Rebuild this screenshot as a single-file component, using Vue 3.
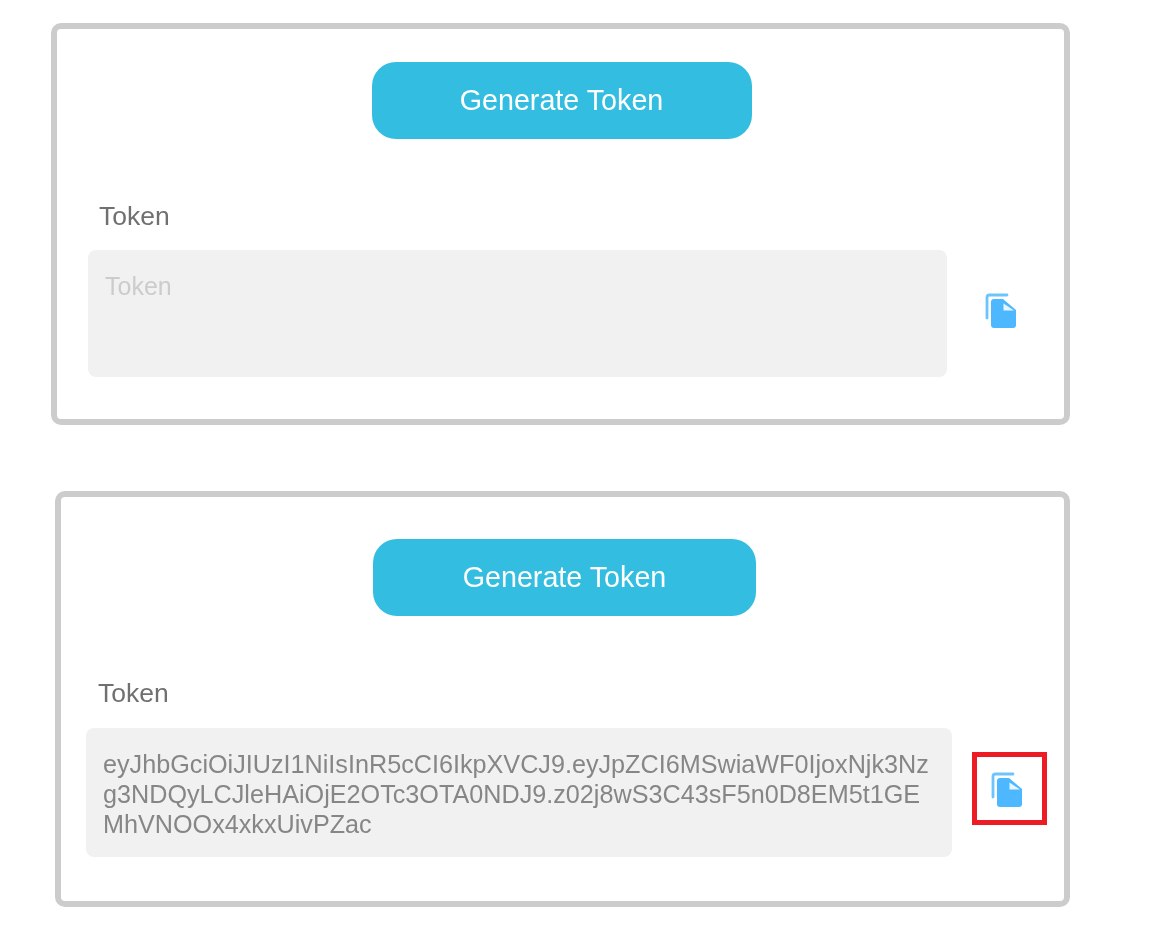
<template>
  <div class="page">
    <section v-for="card in cards" :key="card.id" class="card" :class="card.id">
      <button type="button" class="generate">Generate Token</button>
      <p class="label">Token</p>
      <div class="row">
        <div class="token" :class="{ empty: !card.token }">{{ card.token || 'Token' }}</div>
        <div class="copy" :class="{ marked: card.marked }">
          <svg width="32" height="36" viewBox="0 0 32 36">
            <path d="M2 25V4.500A2.500 2.500 0 0 1 4.500 2H22" fill="none" stroke="#6cc4ff" stroke-width="2.800" stroke-linecap="round" />
            <path d="M9 6H18L31 17V32A3 3 0 0 1 28 35H9A3 3 0 0 1 6 32V9A3 3 0 0 1 9 6Z" fill="#4db8ff" />
            <path d="M18.500 10.500V17.500H29Z" fill="#e6f5ff" />
          </svg>
        </div>
      </div>
    </section>
  </div>
</template>

<script setup>
const cards = [
  { id: 'first', token: '', marked: false },
  {
    id: 'second',
    token: 'eyJhbGciOiJIUzI1NiIsInR5cCI6IkpXVCJ9.eyJpZCI6MSwiaWF0IjoxNjk3Nzg3NDQyLCJleHAiOjE2OTc3OTA0NDJ9.z02j8wS3C43sF5n0D8EM5t1GEMhVNOOx4xkxUivPZac',
    marked: true,
  },
]
</script>

<style>
body {
  background: #fff;
}
</style>

<style scoped>
.page {
  display: flex;
  flex-direction: column;
  height: 926px;
  box-sizing: border-box;
  padding-top: 23px;
  font-family: "Liberation Sans", Arial, sans-serif;
  filter: blur(0.4px);
}
.card {
  box-sizing: border-box;
  border: 6px solid #ccc;
  border-radius: 10px;
  background: #fff;
  display: flex;
  flex-direction: column;
}
.first {
  width: 1019px;
  height: 402px;
  margin-left: 51px;
  padding: 33px 0 0 31px;
}
.second {
  width: 1015px;
  height: 416px;
  margin-left: 55px;
  margin-top: 66px;
  padding: 42px 0 0 25px;
}
.generate {
  align-self: center;
  height: 77px;
  border: none;
  border-radius: 24px;
  background: #33bde0;
  color: #fff;
  font-family: inherit;
  font-size: 28.700px;
}
.first .generate {
  width: 380px;
  margin-left: -29px;
}
.second .generate {
  width: 383px;
  margin-left: -21px;
}
.label {
  margin: 62px 0 19px 11px;
  font-size: 26.500px;
  line-height: 30px;
  color: #707070;
}
.second .label {
  margin-left: 12px;
  margin-bottom: 20px;
}
.row {
  display: flex;
  align-items: center;
}
.first .row {
  gap: 19px;
}
.second .row {
  gap: 20px;
}
.token {
  box-sizing: border-box;
  border-radius: 8px;
  background: #f1f1f1;
  padding: 21px 20px 21px 17px;
  font-size: 25.200px;
  line-height: 30px;
  color: #868686;
  word-break: break-all;
}
.first .token {
  width: 859px;
  height: 127px;
}
.second .token {
  width: 866px;
  height: 129px;
}
.token.empty {
  font-size: 25px;
  color: #ccc;
}
.copy {
  box-sizing: border-box;
  width: 75px;
  height: 73px;
  margin-bottom: 8px;
  padding: 3px 5px 0 0;
  border: 5px solid transparent;
  display: flex;
  align-items: center;
  justify-content: center;
}
.copy.marked {
  border-color: #ed1c24;
}
</style>
